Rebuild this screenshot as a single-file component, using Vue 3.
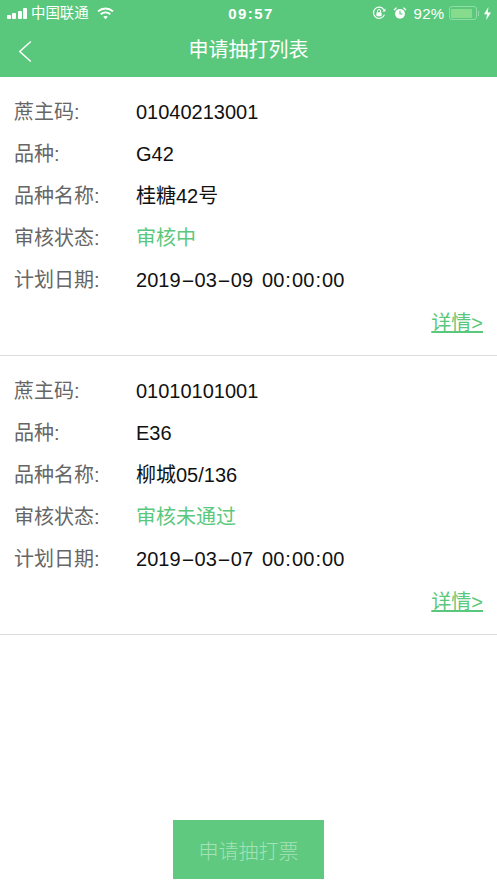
<script setup>
const cards = [
  { code: '01040213001', kind: 'G42', name: '桂糖42号', status: '审核中', date: '2019-03-09 00:00:00' },
  { code: '01010101001', kind: 'E36', name: '柳城05/136', status: '审核未通过', date: '2019-03-07 00:00:00' },
]
const sepClass = { '-': 'dash', ':': 'colon', ' ': 'gap' }
const dateChars = (date) => date.split('').map((ch) => ({ ch, cls: sepClass[ch] || '' }))
</script>

<template>
  <div class="page">
    <header class="head">
      <div class="status">
        <div class="status-left">
          <span class="bars"><i class="b1"></i><i class="b2"></i><i class="b3"></i><i class="b4"></i></span>
          <span class="carrier">中国联通</span>
          <svg class="wifi" width="17" height="13" viewBox="0 0 17 13">
            <path d="M1 4.4C5.3 .6 11.7 .6 16 4.4" fill="none" stroke="#fff" stroke-width="1.9" />
            <path d="M3.7 7.2C6.5 4.9 10.5 4.9 13.3 7.2" fill="none" stroke="#fff" stroke-width="1.9" />
            <path d="M6.2 9.7C7.6 8.6 9.4 8.6 10.8 9.7L8.5 12.2Z" fill="#fff" />
          </svg>
        </div>
        <span class="time">09:57</span>
        <div class="status-right">
          <svg width="14" height="14" viewBox="0 0 14 14">
            <path d="M12.4 8.6A5.6 5.6 0 1 1 12 4" fill="none" stroke="#fff" stroke-width="1.2" />
            <path d="M13.4 2.4V5.6H10.2Z" fill="#fff" />
            <rect x="4.4" y="6.2" width="5.2" height="4" rx=".6" fill="#fff" />
            <path d="M5.5 6.2V5A1.5 1.5 0 0 1 8.5 5V6.2" fill="none" stroke="#fff" stroke-width="1" />
          </svg>
          <svg class="alarm" width="14" height="14" viewBox="0 0 14 14">
            <circle cx="7" cy="7.8" r="4.9" fill="#fff" />
            <path d="M7 4.8V8H9.6" fill="none" stroke="#5ac87c" stroke-width="1.1" />
            <path d="M.6 3.6 3.2 1.2 4 2 1.6 4.6ZM13.4 3.6 10.8 1.2 10 2 12.4 4.6Z" fill="#fff" />
          </svg>
          <span class="pct">92%</span>
          <span class="battery"><span class="level"></span></span>
          <span class="nub"></span>
          <svg class="bolt" width="7" height="13" viewBox="0 0 7 13">
            <path d="M4.4 0 0 7.2H3L2.2 13 7 5.4H3.8Z" fill="#fff" />
          </svg>
        </div>
      </div>
      <div class="nav">
        <svg class="back" width="14" height="23" viewBox="0 0 14 23">
          <path d="M12.8 1.5 1.8 11.5 12.8 21.5" fill="none" stroke="#fff" stroke-width="1.5" />
        </svg>
        <h1 class="title">申请抽打列表</h1>
      </div>
    </header>

    <section v-for="card in cards" :key="card.code" class="card">
      <dl class="rows">
        <div class="row"><dt>蔗主码:</dt><dd>{{ card.code }}</dd></div>
        <div class="row"><dt>品种:</dt><dd>{{ card.kind }}</dd></div>
        <div class="row"><dt>品种名称:</dt><dd>{{ card.name }}</dd></div>
        <div class="row"><dt>审核状态:</dt><dd class="green">{{ card.status }}</dd></div>
        <div class="row">
          <dt>计划日期:</dt>
          <dd><span v-for="(c, i) in dateChars(card.date)" :key="i" :class="c.cls">{{ c.ch }}</span></dd>
        </div>
      </dl>
      <div class="more"><a class="detail">详情&gt;</a></div>
    </section>

    <div class="footer"><button class="apply" type="button">申请抽打票</button></div>
  </div>
</template>

<style>
body { background: #fff; }
</style>

<style scoped>
.page {
  width: 497px;
  height: 883px;
  display: flex;
  flex-direction: column;
  overflow: hidden;
  background: #fff;
  font-family: "Liberation Sans", "Noto Sans CJK SC", sans-serif;
}
.head { background: #5ac87c; height: 77px; color: #fff; flex: none; }
.status {
  height: 26px;
  padding: 0 6px 0 7px;
  display: grid;
  grid-template-columns: 1fr auto 1fr;
  align-items: center;
}
.status-left, .status-right { display: flex; align-items: center; }
.status-right { justify-content: flex-end; }
.bars { display: flex; align-items: flex-end; gap: 1.33px; height: 12px; margin-right: 4px; }
.bars i { width: 4px; background: #fff; border-radius: 1px; display: block; }
.b1 { height: 4px; } .b2 { height: 6px; } .b3 { height: 8px; } .b4 { height: 11px; }
.carrier { font-size: 14.4px; line-height: 16px; }
.wifi { margin-left: 8px; }
.time { font-size: 15px; font-weight: 700; letter-spacing: 1.4px; margin-left: 4px; }
.alarm { margin-left: 7px; }
.pct { font-size: 15px; margin-left: 7px; letter-spacing: .3px; }
.battery {
  width: 28px; height: 14px; margin-left: 4px; padding: 1.5px;
  border: 1px solid #8fdca7; border-radius: 3px; box-sizing: border-box; display: block;
}
.level { display: block; width: 92%; height: 100%; background: #86dc8c; border-radius: 1px; }
.nub { width: 1.5px; height: 5px; background: #8fdca7; margin-left: 1px; }
.bolt { margin-left: 5px; }
.nav { height: 51px; position: relative; display: flex; align-items: center; justify-content: center; }
.back { position: absolute; left: 18px; top: 14px; }
.title { margin: 0 0 3px; font-size: 20px; font-weight: 400; line-height: 28px; }

.card { height: 279px; box-sizing: border-box; border-bottom: 1px solid #dcdcdc; padding: 14.5px 14px 0; flex: none; }
.rows { margin: 0; }
.row { display: flex; align-items: center; height: 41.8px; font-size: 20px; line-height: 28px; }
dt { width: 122px; color: #666; flex: none; }
dd { margin: 0; color: #111; white-space: pre; }
.dash { display: inline-block; width: 14px; text-align: center; transform: scaleX(2.1); }
.colon { display: inline-block; width: 7.8px; text-align: center; }
.gap { display: inline-block; width: 9px; }
.green { color: #5ac87c; }
.more { display: flex; justify-content: flex-end; margin-top: 8.5px; }
.detail { font-size: 20px; line-height: 28px; color: #5ac87c; text-decoration: underline; }

.footer { margin-top: auto; padding-bottom: 4px; display: flex; justify-content: center; }
.apply {
  width: 151px; height: 59px; border: 0; padding: 1px 0 0;
  background: #5ec97f; color: #a5e2b8;
  font: inherit; font-size: 20px; font-weight: 300;
}
</style>
